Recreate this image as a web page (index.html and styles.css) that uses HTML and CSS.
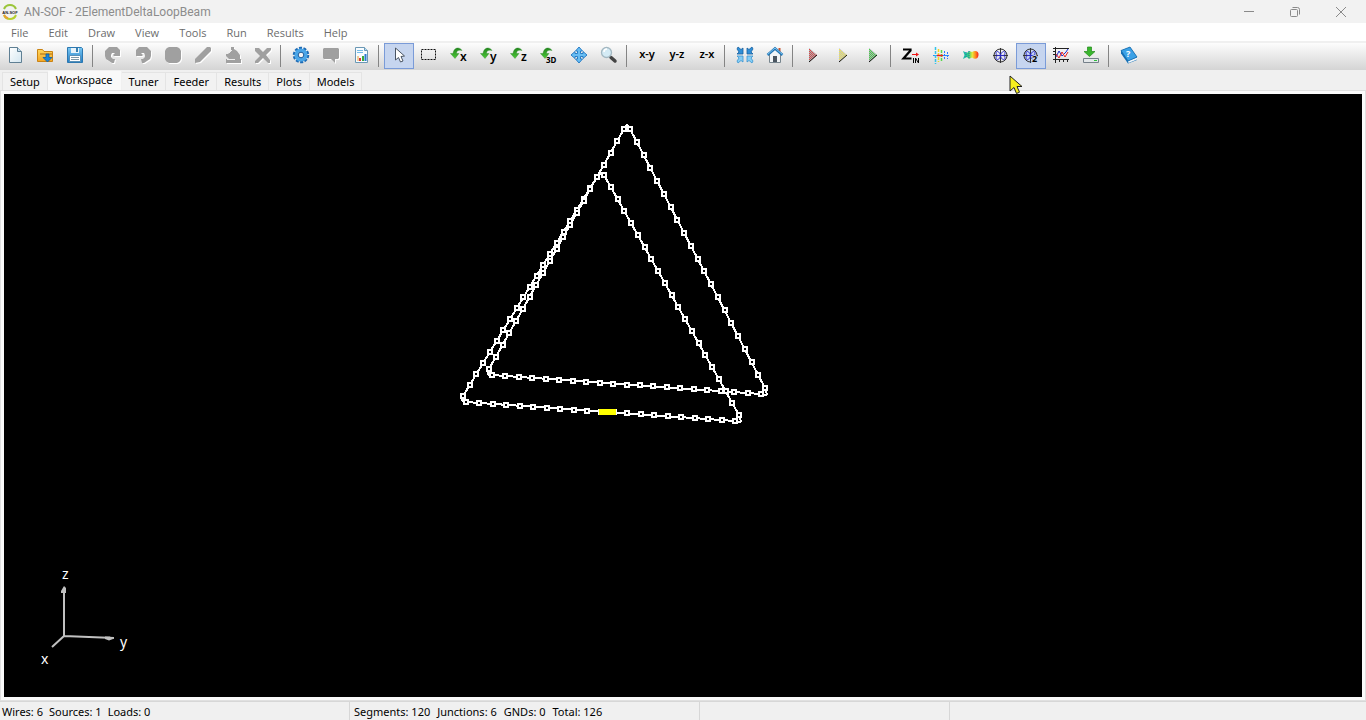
FILE: index.html
```html
<!DOCTYPE html>
<html lang="en">
<head>
<meta charset="utf-8">
<title>AN-SOF - 2ElementDeltaLoopBeam</title>
<link rel="stylesheet" href="styles.css">
</head>
<body>
<svg class="defs" width="0" height="0" aria-hidden="true">
  <defs>
    <linearGradient id="gPaper" x1="0" y1="0" x2="1" y2="1"><stop offset="0" stop-color="#ffffff"/><stop offset="1" stop-color="#d3e6f0"/></linearGradient>
    <linearGradient id="gFolder" x1="0" y1="0" x2="0" y2="1"><stop offset="0" stop-color="#ffd75e"/><stop offset="1" stop-color="#f5a623"/></linearGradient>
    <linearGradient id="gDisk" x1="0" y1="0" x2="0" y2="1"><stop offset="0" stop-color="#7cc8f2"/><stop offset="1" stop-color="#1f7fcb"/></linearGradient>
    <linearGradient id="gGreen" x1="0" y1="0" x2="0" y2="1"><stop offset="0" stop-color="#23851f"/><stop offset="1" stop-color="#4cc936"/></linearGradient>
    <linearGradient id="gHeat" x1="0" y1="0" x2="1" y2="0"><stop offset="0" stop-color="#19b8b0"/><stop offset=".35" stop-color="#2fd07a"/><stop offset=".6" stop-color="#e8e83a"/><stop offset=".8" stop-color="#ff8a1e"/><stop offset="1" stop-color="#f2201a"/></linearGradient>
    <pattern id="pRed" width="2" height="2" patternUnits="userSpaceOnUse"><rect width="2" height="2" fill="#a4b4b8"/><path d="M0 0h1v1H0zM1 1h1v1H1z" fill="#e04444"/></pattern>
    <pattern id="pYellow" width="2" height="2" patternUnits="userSpaceOnUse"><rect width="2" height="2" fill="#c0c0cc"/><path d="M0 0h1v1H0zM1 1h1v1H1z" fill="#efe650"/></pattern>
    <pattern id="pLime" width="2" height="2" patternUnits="userSpaceOnUse"><rect width="2" height="2" fill="#b0a8b8"/><path d="M0 0h1v1H0zM1 1h1v1H1z" fill="#44d844"/></pattern>
    <path id="turn" d="M13 5.500C11 2 5 1.500 4 8.500H1.500L6 13.500 10 8.500H7.500C7.500 5.500 9.500 4.500 13 5.500z" fill="url(#gGreen)" stroke="#2c8a28" stroke-width=".4"/>
    <g id="polar" fill="none">
      <circle cx="9.500" cy="10.500" r="6.500" stroke="#333"/>
      <path d="M2 10.500h15M9.500 3v15" stroke="#333"/>
      <path d="M9.500 10.500C8.500 6 5 5.500 5 8s1 2.500 4.500 2.500C6 10.500 5 10.500 5 13s3.500 2.500 4.500-2.500C10.500 6 14 5.500 14 8s-1 2.500-4.500 2.500c3.500 0 4.500 0 4.500 2.500s-3.500 2.500-4.500-2.500" stroke="#2a2ad0"/>
    </g>
  </defs>
</svg>

<div class="app">
  <header class="titlebar">
    <svg class="logo" viewBox="0 0 16 16" aria-hidden="true">
      <path d="M2 5A6.500 6.500 0 0 1 14 5" fill="none" stroke="#9bc53a" stroke-width="2"/>
      <path d="M2 11A6.500 6.500 0 0 0 14 11" fill="none" stroke="#b5cf2f" stroke-width="2"/>
      <path d="M2 11a6.500 6.500 0 0 0 4 3.300" fill="none" stroke="#e8a030" stroke-width="2"/>
      <text x="8" y="9.500" class="logo-text">AN-SOF</text>
    </svg>
    <h1 class="title">AN-SOF - 2ElementDeltaLoopBeam</h1>
    <div class="window-controls">
      <button type="button" aria-label="Minimize"><svg viewBox="0 0 12 12"><path d="M1 5.500h10"/></svg></button>
      <button type="button" aria-label="Restore"><svg viewBox="0 0 12 12"><rect x="1.500" y="3.500" width="7" height="7" rx="1"/><path d="M3.500 1.500h5a2 2 0 0 1 2 2v5"/></svg></button>
      <button type="button" aria-label="Close"><svg viewBox="0 0 12 12"><path d="M1 1l10 10M11 1L1 11"/></svg></button>
    </div>
  </header>

  <nav class="menubar" aria-label="Main menu">
    <button type="button">File</button><button type="button">Edit</button><button type="button">Draw</button><button type="button">View</button><button type="button">Tools</button><button type="button">Run</button><button type="button">Results</button><button type="button">Help</button>
  </nav>

  <div class="toolbar" role="toolbar" aria-label="Tools">
    <button type="button" aria-label="New"><svg viewBox="0 0 20 20"><path d="M4.500 2.500h8l4 4v11h-12z" fill="url(#gPaper)" stroke="#5f7f93"/><path d="M12.500 2.500v4h4" fill="#c2dced" stroke="#5f7f93"/></svg></button>
    <button type="button" aria-label="Open"><svg viewBox="0 0 20 20"><path d="M2.500 16.500v-12h5l1.500 2h8.500v10z" fill="url(#gFolder)" stroke="#c98314"/><path d="M5 9h12" stroke="#a96a10"/><path d="M11 9h3v3.500h3L12.500 17 8 12.500h3z" fill="#1d86d8" stroke="#0e5da5" stroke-width=".8"/></svg></button>
    <button type="button" aria-label="Save"><svg viewBox="0 0 20 20"><path d="M2.500 2.500h14l1 1v14h-15z" fill="url(#gDisk)" stroke="#2d78b0"/><path d="M6 3h8v5H6z" fill="#e8f3fa"/><path d="M11 3h2v4h-2z" fill="#397fae"/><path d="M4.500 10.500h11v6h-11z" fill="#fff" stroke="#5790b8"/><path d="M6 12.500h8M6 14.500h8" stroke="#7d98a8"/></svg></button>
    <span class="sep"></span>
    <button type="button" aria-label="Undo" disabled><svg viewBox="0 0 20 20"><path d="M11 18H9l-6-4-1-3V6l4-4h8l2 2 1 1v6h-6l-1-1 2-2h-3l-1 2v2l2 2h2z"/></svg></button>
    <button type="button" aria-label="Redo" disabled><svg viewBox="0 0 20 20"><path d="M9 18h2l6-4 1-3V6l-4-4H6L4 4 3 5v6h6l1-1-2-2h3l1 2v2l-2 2H8z"/></svg></button>
    <button type="button" aria-label="Stop" disabled><svg viewBox="0 0 20 20"><path d="M6 2h8l2 1 1 1 1 2v8l-1 2-1 1-2 1H6l-2-1-1-1-1-2V6l1-2 1-1z"/></svg></button>
    <button type="button" aria-label="Modify" disabled><svg viewBox="0 0 20 20"><path d="M14 2h3l1 1v3L7 17l-5 1v-4z"/></svg></button>
    <button type="button" aria-label="Fill" disabled><svg viewBox="0 0 20 20"><path d="M8 2h3v2l3 2 3 4v4h1v4H3v-4h3l-3-3V9h2l3-3z"/><path d="M9 5L6 8M4 14.500h8" stroke="#eee"/></svg></button>
    <button type="button" aria-label="Delete" disabled><svg viewBox="0 0 20 20"><path d="M2 3h4l4 4 4-4h4v2l-5 5 4 5v3h-2l-5-5-5 5H2v-2l5-5-5-5z"/></svg></button>
    <span class="sep"></span>
    <button type="button" aria-label="Preferences"><svg viewBox="0 0 20 20"><circle cx="10" cy="10" r="7" fill="none" stroke="#1d6bb5" stroke-width="2.500" stroke-dasharray="3 1.400"/><circle cx="10" cy="10" r="4.800" fill="#eaf4fb" stroke="#4aa6e8" stroke-width="3.500"/><circle cx="10" cy="10" r="2.800" fill="#f4f4f4" stroke="#12589c"/></svg></button>
    <button type="button" aria-label="Comments" disabled><svg viewBox="0 0 20 20"><path d="M3 3h14l1 1v9l-1 1h-3v4l-4-4H3l-1-1V4z"/></svg></button>
    <button type="button" aria-label="Report"><svg viewBox="0 0 20 20"><path d="M4.500 2.500h9l3 3v12h-12z" fill="#f8fcff" stroke="#6b98b5"/><path d="M13.500 2.500v3h3" fill="#b7dcf2" stroke="#6b98b5"/><path d="M6 5.500h6M6 7.500h6" stroke="#75bce8"/><path d="M7 16v-5" stroke="#e8a030"/><path d="M9 16v-3" stroke="#df3434" stroke-width="2"/><path d="M12 16v-5" stroke="#3baa3b" stroke-width="2"/><path d="M14.500 16V9" stroke="#2c7bd0" stroke-width="2"/></svg></button>
    <span class="sep"></span>
    <button type="button" aria-label="Select" class="pressed"><svg viewBox="0 0 20 20"><path d="M6.500 3v12l3-2.500 2 4.500 2.500-1-2-4.500 3.500-.5z" fill="#fff" stroke="#4a5564"/></svg></button>
    <button type="button" aria-label="Selection box"><svg viewBox="0 0 20 20"><rect x="2.500" y="4.500" width="14" height="10" fill="none" stroke="#111" stroke-dasharray="2 1"/></svg></button>
    <button type="button" aria-label="Rotate around x"><svg viewBox="0 0 20 20"><use href="#turn"/><text x="11" y="16" class="axis">x</text></svg></button>
    <button type="button" aria-label="Rotate around y"><svg viewBox="0 0 20 20"><use href="#turn"/><text x="11" y="16" class="axis">y</text></svg></button>
    <button type="button" aria-label="Rotate around z"><svg viewBox="0 0 20 20"><use href="#turn"/><text x="12" y="16" class="axis">z</text></svg></button>
    <button type="button" aria-label="Rotate in 3D"><svg viewBox="0 0 20 20"><use href="#turn"/><text x="7" y="18" class="axis small">3D</text></svg></button>
    <button type="button" aria-label="Move"><svg viewBox="0 0 20 20"><path d="M10 2l3.500 4H11.500v2.500H14V6.500l4 3.500-4 3.500v-2h-2.500V14h2L10 18l-3.500-4h2v-2.500H6v2L2 10l4-3.500v2h2.500V6h-2z" fill="#67bdf3" stroke="#1d74c0" stroke-width=".9"/></svg></button>
    <button type="button" aria-label="Zoom"><svg viewBox="0 0 20 20"><path d="M12 12.500l4 3.500" stroke="#444" stroke-width="3.500" stroke-linecap="round"/><circle cx="7.500" cy="7.500" r="5" fill="#d4ebf5" stroke="#a3b8c2" stroke-width="1.300"/><path d="M5 7a3 3 0 0 1 3-3" stroke="#fff" fill="none" stroke-width="1.500"/></svg></button>
    <span class="sep"></span>
    <button type="button" class="plane">x-y</button>
    <button type="button" class="plane">y-z</button>
    <button type="button" class="plane">z-x</button>
    <span class="sep"></span>
    <button type="button" aria-label="Fit to window"><svg viewBox="0 0 20 20" stroke-width=".8"><path d="M3 2l3 2.500L8 3v6H2l2-2L2 4zM17 2l-3 2.500L12 3v6h6l-2-2 2-3z" fill="#2f8fd8" stroke="#175f9f"/><path d="M3 18l3-2.500L8 17v-6H2l2 2-2 3zM17 18l-3-2.500-2 1.500v-6h6l-2 2 2 3z" fill="#83cdf5" stroke="#3a93cf"/></svg></button>
    <button type="button" aria-label="Home"><svg viewBox="0 0 20 20"><path d="M13.500 3h2v5h-2z" fill="#c45634"/><path d="M4.500 9L10 4l5.500 5v8.500h-11z" fill="#f2f5f7" stroke="#77858e"/><path d="M8 11h4v6H8z" fill="#4a5560"/><path d="M2.500 10L10 3.500l7.500 6.500" fill="none" stroke="#2275b5" stroke-width="2.500"/><path d="M2.500 9.500L10 3l7.500 6.500" fill="none" stroke="#7cc6f2"/></svg></button>
    <span class="sep"></span>
    <button type="button" aria-label="Run currents"><svg viewBox="0 0 20 20"><path d="M6 3l8 7-8 7z" fill="url(#pRed)"/><path d="M6 17l8-7" stroke="#111" fill="none"/></svg></button>
    <button type="button" aria-label="Run far field"><svg viewBox="0 0 20 20"><path d="M6 3l8 7-8 7z" fill="url(#pYellow)"/><path d="M6 17l8-7" stroke="#111" fill="none"/></svg></button>
    <button type="button" aria-label="Run all"><svg viewBox="0 0 20 20"><path d="M6 3l8 7-8 7z" fill="url(#pLime)"/><path d="M6 17l8-7" stroke="#111" fill="none"/></svg></button>
    <span class="sep"></span>
    <button type="button" aria-label="Input impedance"><svg viewBox="0 0 20 20"><path d="M2 4.500h7.500v1l-7 8h8" fill="none" stroke="#000" stroke-width="2.200"/><path d="M11 9.500h5" stroke="#f01818"/><path d="M15 7.500l3 2-3 2z" fill="#f01818"/><path d="M12.500 13v5M14.500 18v-5l3 5v-5" fill="none" stroke="#000"/></svg></button>
    <button type="button" aria-label="Currents"><svg viewBox="0 0 20 20"><path d="M2 10.500h16" stroke="#1e90ff"/><path d="M4.500 2v17" stroke="#35c3e8" stroke-width="1.500" stroke-dasharray="3 1"/><path d="M7.500 4v13" stroke="#f2d820" stroke-width="1.500" stroke-dasharray="3 1"/><path d="M10.500 5v11" stroke="#57d84a" stroke-width="1.500" stroke-dasharray="3 1"/><path d="M13.500 6v9M16.500 7v7" stroke="#2c78ff" stroke-dasharray="2 1"/><path d="M6 10.500h6" stroke="#f02020" stroke-width="1.500"/></svg></button>
    <button type="button" aria-label="3D pattern"><svg viewBox="0 0 20 20"><path d="M2 6l4 2 2-2 3 1c3-2 7-1 6.500 3S14 15 11 12.500l-3 1.500-2-2-4 2 1.500-4z" fill="url(#gHeat)"/><path d="M5 7v6M8 6v8" stroke="#2465c8" stroke-dasharray="1 1"/></svg></button>
    <button type="button" aria-label="Polar plot"><svg viewBox="0 0 20 20"><use href="#polar"/></svg></button>
    <button type="button" aria-label="Polar plot 2" class="pressed"><svg viewBox="0 0 20 20"><use href="#polar"/><text x="11" y="17" class="axis two">2</text></svg></button>
    <button type="button" aria-label="Frequency plots"><svg viewBox="0 0 20 20"><path d="M2 3.500h16M2 14.500h16M4.500 2v16M2 6.500h2M2 9.500h2M8.500 15v2M12.500 15v2M16.500 15v2" stroke="#222"/><path d="M5 12l3-6 3 5 4-4 2-3" fill="none" stroke="#1b2fd0"/><path d="M5 9l3 4 3-6 3 5 3-5" fill="none" stroke="#e82020"/></svg></button>
    <button type="button" aria-label="Export"><svg viewBox="0 0 20 20"><path d="M2.500 13.500h15v4h-15z" fill="#e4e8ea" stroke="#75808a"/><path d="M13 15.500h3" stroke="#2cbf3a"/><path d="M6.500 2h4v4.500H14l-5.500 5-5.500-5h3.500z" fill="#39b62d" stroke="#238a1b" stroke-width=".7"/></svg></button>
    <span class="sep"></span>
    <button type="button" aria-label="Help"><svg viewBox="0 0 20 20"><path d="M2 5.500L11 2l7 10v3l-9 3.500L2 8.500z" fill="#1672b8"/><path d="M9 16l9-3.500v2L9.500 18z" fill="#f3f7fa"/><path d="M2 5.500L11 2l7 10-9 4z" fill="#3ba1e6" stroke="#1467a8" stroke-width=".7"/><text x="7" y="12" class="question">?</text></svg></button>
  </div>

  <div class="tabs" role="tablist">
    <button type="button" role="tab">Setup</button><button type="button" role="tab" aria-selected="true" class="active">Workspace</button><button type="button" role="tab">Tuner</button><button type="button" role="tab">Feeder</button><button type="button" role="tab">Results</button><button type="button" role="tab">Plots</button><button type="button" role="tab">Models</button>
  </div>

  <main class="page">
    <div class="viewport">
      <svg class="wires" id="wires" role="img" aria-label="Antenna wires"></svg>
      <svg class="triad" viewBox="0 -10 110 120" aria-label="Coordinate axes">
        <path d="M32 70V22M32 70l50 2M32 70L20 81" fill="none" stroke="#c0c0c0" stroke-width="2"/>
        <path d="M32 20l2 2v5h-5v-2zM81 73l-4 1.500-4-1.500v-2.500h5z" fill="#c0c0c0"/>
        <text x="30" y="13">z</text>
        <text x="88" y="81">y</text>
        <text x="9" y="98">x</text>
      </svg>
    </div>
  </main>

  <footer class="statusbar">
    <div class="panel first"><span>Wires: 6</span><span>Sources: 1</span><span>Loads: 0</span></div>
    <div class="panel second"><span>Segments: 120</span><span>Junctions: 6</span><span>GNDs: 0</span><span>Total: 126</span></div>
    <div class="panel third"></div>
  </footer>

  <svg class="pointer" viewBox="0 0 14 20" aria-hidden="true"><path d="M1 1v15l4-3.500 2.500 6 3-1.300-2.500-5.700h5z" fill="#f7ef1e" stroke="#222"/></svg>
</div>
<script src="wires.js"></script>
</body>
</html>
```
FILE: styles.css
```css
* { box-sizing: border-box; }

body {
  margin: 0;
  background: #f0f0f0;
  font-family: "Noto Sans", "Open Sans", sans-serif;
  font-size: 11px;
  color: #000;
}

button {
  margin: 0;
  padding: 0;
  border: 0;
  background: none;
  font: inherit;
  color: inherit;
}

.defs { position: absolute; }

.app {
  display: flex;
  flex-direction: column;
  height: 100vh;
}

.titlebar {
  display: flex;
  align-items: center;
  height: 23px;
  padding: 0 2px;
  background: #f2f2f2;
}

.logo { width: 16px; height: 16px; margin-right: 6px; }
.logo-text { font: bold 4px "Liberation Sans", sans-serif; text-anchor: middle; fill: #222; }

.title {
  flex: 1;
  margin: 0;
  font: 12px/16px Roboto, sans-serif;
  color: #8c8c8c;
}

.window-controls { display: flex; }
.window-controls button { display: grid; place-items: center; width: 46px; height: 22px; }
.window-controls svg { width: 12px; height: 12px; fill: none; stroke: #8a8a8a; }

.menubar {
  display: flex;
  height: 18px;
  padding-left: 1px;
  background: #fff;
  color: #6c6c6c;
  font-family: "Open Sans", sans-serif;
  line-height: 20px;
}
.menubar button { padding: 0 10px; }

.toolbar {
  display: flex;
  height: 29px;
  border-top: 2px solid #f0f0f0;
  background: linear-gradient(#fdfdfd, #d4d4d4);
}
.toolbar button {
  display: grid;
  justify-content: center;
  width: 30px;
  height: 26px;
  padding-top: 2px;
}
.toolbar svg { width: 20px; height: 20px; }
.toolbar button:disabled svg { fill: #a0a0a0; filter: drop-shadow(1px 1px 0 #fff); }
.toolbar .pressed { padding-top: 1px; border: 1px solid #7a9bd8; background: #c6d5ef; }
.toolbar .plane { font-weight: 600; line-height: 18px; }
.sep { width: 8px; height: 22px; margin-top: 2px; background: linear-gradient(#848484, #848484) 2px 0 / 1px 100% no-repeat; }

.axis { font: 600 12px "Noto Sans", sans-serif; }
.axis.small { font-size: 8px; font-weight: 700; }
.axis.two { font-size: 9px; font-weight: 700; stroke: #c6d5ef; stroke-width: 2px; paint-order: stroke; }
.question { font: bold 9px "Noto Sans", sans-serif; fill: #fff; }

.tabs {
  display: flex;
  align-items: flex-end;
  height: 20px;
  padding-left: 2px;
}
.tabs button {
  height: 18px;
  padding: 0 7px;
  border: 1px solid #e4e4e4;
  border-width: 1px 1px 0 0;
  background: #f2f2f2;
  line-height: 17px;
}
.tabs button:first-child { border-left-width: 1px; }
.tabs .active {
  height: 20px;
  padding: 0 8px 2px;
  border-color: #f0f0f0;
  background: #f9f9f9;
}

.page {
  flex: 1;
  display: flex;
  min-height: 0;
  padding: 3px;
  border: 1px solid #e0e0e0;
  background: #fafafa;
}
.viewport { position: relative; flex: 1; background: #000; }
.wires { display: block; width: 100%; height: 100%; }
.wire { fill: none; stroke: #fff; stroke-width: 2; shape-rendering: crispEdges; }
.node { fill: #000; stroke: #fff; stroke-width: 2; shape-rendering: crispEdges; }
.source { fill: none; stroke: #ff0; stroke-width: 6; }

.triad { position: absolute; left: 28px; bottom: 21px; width: 110px; height: 120px; }
.triad text { font: 14px "Noto Sans", sans-serif; fill: #fff; }

.statusbar {
  display: flex;
  height: 19px;
  border-top: 1px solid #d7d7d7;
  line-height: 19px;
}
.panel { display: flex; gap: 6px; padding-left: 4px; border-right: 1px solid #d7d7d7; }
.first { width: 350px; padding-left: 2px; }
.second { width: 350px; gap: 7px; }
.third { width: 250px; }

.pointer { position: absolute; left: 1009px; top: 75px; width: 14px; height: 20px; pointer-events: none; }
```
FILE: wires.js
```js
// Each wire: start corner, first node, last node, end corner.
const SEGMENTS = 20;
const wires = [
  [[458, 307], [459, 302], [593, 83], [597, 79]],
  [[597, 79], [600, 81], [735, 321], [737, 328]],
  [[458, 307], [462, 308], [731, 327], [737, 328]],
  [[484, 281], [485, 275], [620, 35], [623, 30]],
  [[623, 30], [626, 35], [761, 294], [763, 301]],
  [[484, 281], [488, 281], [757, 300], [763, 301]]
];
const source = [[595, 318], [612, 318]];

const svg = document.getElementById("wires");
function add(tag, attrs) {
  const el = document.createElementNS("http://www.w3.org/2000/svg", tag);
  for (const key in attrs) el.setAttribute(key, attrs[key]);
  svg.appendChild(el);
}

for (const wire of wires) {
  add("polyline", { class: "wire", points: wire.join(" ") });
}
for (const [, first, last] of wires) {
  for (let i = 0; i <= SEGMENTS; i++) {
    const x = Math.round(first[0] + (last[0] - first[0]) * i / SEGMENTS);
    const y = Math.round(first[1] + (last[1] - first[1]) * i / SEGMENTS);
    add("rect", { class: "node", x: x - 2, y: y - 2, width: 4, height: 4 });
  }
}
add("polyline", { class: "source", points: source.join(" ") });
```
